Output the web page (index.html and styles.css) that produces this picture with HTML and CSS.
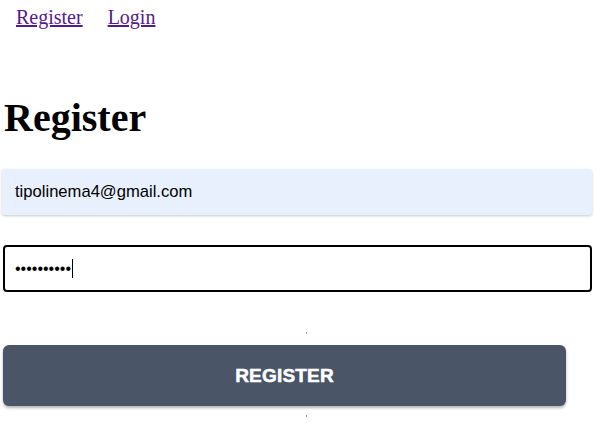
FILE: index.html
```html
<!DOCTYPE html>
<html>
<head>
<meta charset="utf-8">
<link rel="stylesheet" href="styles.css">
</head>
<body>
<nav class="nav">
  <a href="#" class="nav-link">Register</a>
  <a href="#" class="nav-link">Login</a>
</nav>
<main class="page">
  <h1 class="title">Register</h1>
  <form class="form">
    <div class="field field-email">tipolinema4@gmail.com</div>
    <div class="field field-password"><span class="dots">••••••••••</span><span class="caret"></span></div>
    <div class="mark mark-top"></div>
    <button type="button" class="btn">REGISTER</button>
    <div class="mark mark-bottom"></div>
  </form>
</main>
</body>
</html>
```
FILE: styles.css
```css
html, body {
  margin: 0;
  padding: 0;
  background: #fff;
}
body {
  font-family: "Liberation Serif", serif;
  width: 607px;
  height: 434px;
  overflow: hidden;
}
.nav {
  display: flex;
  gap: 25px;
  padding: 6px 16px 0;
  height: 25px;
}
.nav-link {
  font-size: 20px;
  line-height: 23px;
  color: #551a8b;
  text-decoration: underline;
}
.page {
  padding: 0 0 0 2px;
}
.title {
  font-size: 40px;
  font-weight: bold;
  line-height: 46px;
  margin: 64px 0 0 2px;
  color: #000;
}
.form {
  display: flex;
  flex-direction: column;
  margin-top: 28px;
}
.field {
  box-sizing: border-box;
  width: 590px;
  font-family: "Liberation Sans", Arial, sans-serif;
  font-size: 16px;
  color: #000;
  display: flex;
  align-items: center;
}
.field-email {
  height: 46px;
  background: #e8f0fe;
  border-radius: 3px;
  box-shadow: 0 1px 3px rgba(0,0,0,0.22);
  padding-left: 13px;
  font-size: 16.6px;
}
.field-password {
  margin-top: 30px;
  margin-left: 1px;
  width: 589px;
  height: 47px;
  border: 2px solid #000;
  border-radius: 4px;
  padding-left: 10px;
}
.dots {
  font-size: 16px;
  letter-spacing: 0;
  color: #000;
}
.caret {
  display: inline-block;
  width: 1px;
  height: 19px;
  background: #000;
  margin-left: 1px;
}
.mark {
  width: 1px;
  height: 2px;
  background: #999;
  margin-left: 304px;
}
.mark-top {
  margin-top: 40px;
}
.btn {
  margin: 11px 0 0 1px;
  width: 563px;
  height: 61px;
  border: none;
  border-radius: 6px;
  background: #4a5568;
  color: #fff;
  font-family: "Liberation Sans", Arial, sans-serif;
  font-weight: 900;
  font-size: 19px;
  letter-spacing: 0.2px;
  box-shadow: 0 2px 3px rgba(0,0,0,0.3);
  -webkit-text-stroke: 0.5px #fff;
}
.mark-bottom {
  margin-top: 9px;
}
```
